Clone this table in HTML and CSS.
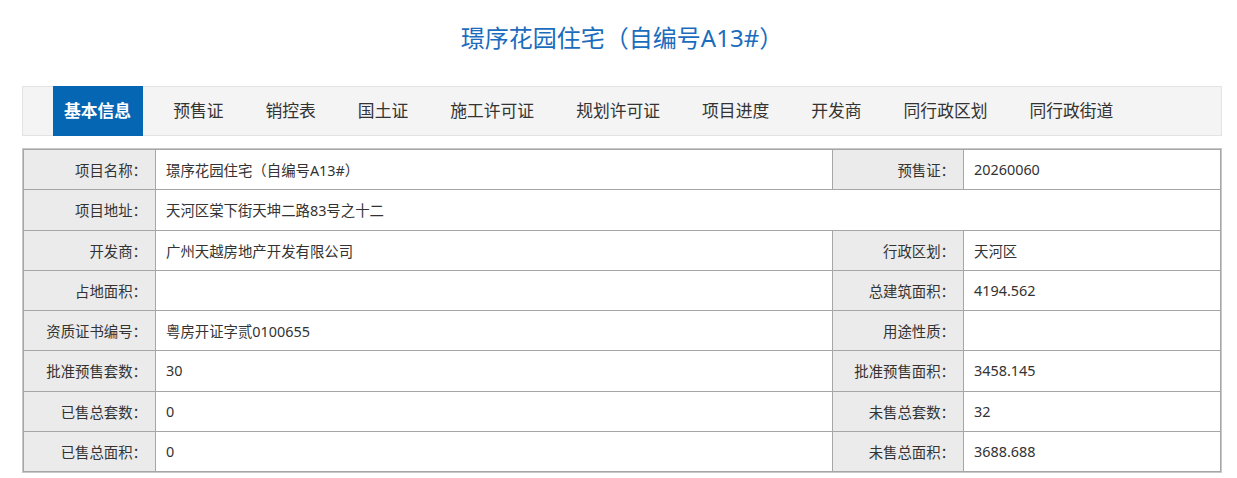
FILE: index.html
```html
<!DOCTYPE html>
<html lang="zh-CN">
<head>
<meta charset="utf-8">
<title>璟序花园住宅（自编号A13#）</title>
<link rel="stylesheet" href="styles.css">
</head>
<body>
<div class="page">
  <h1 class="title">璟序花园住宅（自编号A13#）</h1>
  <ul class="tabs">
    <li class="tab active">基本信息</li>
    <li class="tab">预售证</li>
    <li class="tab">销控表</li>
    <li class="tab">国土证</li>
    <li class="tab">施工许可证</li>
    <li class="tab">规划许可证</li>
    <li class="tab">项目进度</li>
    <li class="tab">开发商</li>
    <li class="tab">同行政区划</li>
    <li class="tab">同行政街道</li>
  </ul>
  <table class="info">
    <colgroup>
      <col class="c-label1">
      <col class="c-value1">
      <col class="c-label2">
      <col class="c-value2">
    </colgroup>
    <tbody>
      <tr>
        <td class="label">项目名称：</td>
        <td class="value">璟序花园住宅（自编号A13#）</td>
        <td class="label">预售证：</td>
        <td class="value">20260060</td>
      </tr>
      <tr>
        <td class="label">项目地址：</td>
        <td class="value" colspan="3">天河区棠下街天坤二路83号之十二</td>
      </tr>
      <tr>
        <td class="label">开发商：</td>
        <td class="value">广州天越房地产开发有限公司</td>
        <td class="label">行政区划：</td>
        <td class="value">天河区</td>
      </tr>
      <tr>
        <td class="label">占地面积：</td>
        <td class="value"></td>
        <td class="label">总建筑面积：</td>
        <td class="value">4194.562</td>
      </tr>
      <tr>
        <td class="label">资质证书编号：</td>
        <td class="value">粤房开证字贰0100655</td>
        <td class="label">用途性质：</td>
        <td class="value"></td>
      </tr>
      <tr>
        <td class="label">批准预售套数：</td>
        <td class="value">30</td>
        <td class="label">批准预售面积：</td>
        <td class="value">3458.145</td>
      </tr>
      <tr>
        <td class="label">已售总套数：</td>
        <td class="value">0</td>
        <td class="label">未售总套数：</td>
        <td class="value">32</td>
      </tr>
      <tr>
        <td class="label">已售总面积：</td>
        <td class="value">0</td>
        <td class="label">未售总面积：</td>
        <td class="value">3688.688</td>
      </tr>
    </tbody>
  </table>
</div>
</body>
</html>
```
FILE: styles.css
```css
html, body {
  margin: 0;
  padding: 0;
  background: #ffffff;
}

body {
  font-family: "Noto Sans", "Noto Sans CJK SC", sans-serif;
  color: #333333;
}

.page {
  width: 1200px;
  margin: 0 0 0 22px;
}

.title {
  margin: 0 0 30px;
  padding-top: 20px;
  height: 36px;
  line-height: 36px;
  text-align: center;
  font-size: 24px;
  font-weight: normal;
  color: #1b6cbd;
}

.tabs {
  list-style: none;
  margin: 0 0 12px;
  padding: 0 0 0 30px;
  height: 48px;
  display: flex;
  background: #f4f4f4;
  border: 1px solid #e3e3e3;
}

.tab {
  padding: 0 11px;
  margin-right: 20px;
  height: 48px;
  line-height: 48px;
  font-size: 16.8px;
  color: #333333;
  white-space: nowrap;
}

.tab.active {
  margin-top: -1px;
  padding: 0 12px 0 11px;
  margin-right: 19px;
  height: 50px;
  line-height: 50px;
  background: #0566b4;
  color: #ffffff;
  font-weight: bold;
}

.info {
  width: 1200px;
  table-layout: fixed;
  border-collapse: separate;
  border-spacing: 0;
  border: 1px solid #c8c8c8;
  font-size: 14.4px;
}

.c-label1 { width: 133px; }
.c-value1 { width: 677px; }
.c-label2 { width: 131px; }
.c-value2 { width: 257px; }

.info td {
  box-sizing: border-box;
  height: 40.25px;
  padding: 0 10px;
  border-right: 1px solid #a6a6a6;
  border-bottom: 1px solid #a6a6a6;
  vertical-align: middle;
  white-space: nowrap;
  color: #333333;
}

.info tr:first-child td {
  border-top: 1px solid #a6a6a6;
  height: 41.25px;
}

.info td:first-child {
  border-left: 1px solid #a6a6a6;
}

.info td.label {
  background: #ebebeb;
  text-align: right;
  padding-right: 8px;
}

.info td.value {
  background: #ffffff;
  text-align: left;
}
```
